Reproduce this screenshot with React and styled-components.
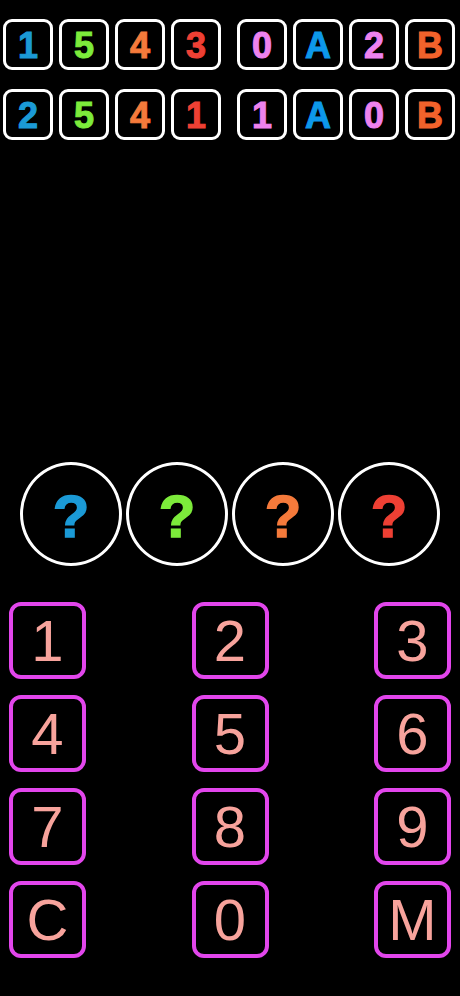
import React from 'react';
import styled, { createGlobalStyle } from 'styled-components';

const GlobalStyle = createGlobalStyle`
    html, body {
        margin: 0;
        padding: 0;
        background: #000;
    }
    body {
        font-family: "Liberation Sans", Arial, sans-serif;
    }
`;

const Screen = styled.div`
    width: 460px;
    min-height: 996px;
    background: #000;
    display: flex;
    flex-direction: column;
`;

const History = styled.div`
    display: flex;
    flex-direction: column;
    gap: 19px;
    padding: 19px 0 0 3px;
`;

const GuessRow = styled.div`
    display: flex;
    gap: 16px;
`;

const Group = styled.div`
    display: flex;
    gap: 6px;
`;

const Tile = styled.div`
    box-sizing: border-box;
    width: 50px;
    height: 51px;
    border: 3px solid #fff;
    border-radius: 9px;
    display: flex;
    align-items: center;
    justify-content: center;
    font-family: "Liberation Sans", Arial, sans-serif;
    font-weight: 700;
    font-size: 36px;
    padding-top: 3px;
    color: ${({ $color }) => $color};
    -webkit-text-stroke: 1px ${({ $color }) => $color};
`;

const Slots = styled.div`
    display: flex;
    justify-content: center;
    gap: 4px;
    margin-top: 322px;
`;

const Slot = styled.div`
    box-sizing: border-box;
    width: 102px;
    height: 104px;
    border: 3px solid #fff;
    border-radius: 50%;
    display: flex;
    align-items: center;
    justify-content: center;
    font-family: "Liberation Sans", Arial, sans-serif;
    font-weight: 700;
    font-size: 60px;
    padding-top: 4px;
    color: ${({ $color }) => $color};
    -webkit-text-stroke: 1.5px ${({ $color }) => $color};
`;

const Keypad = styled.div`
    display: grid;
    grid-template-columns: repeat(3, 77px);
    justify-content: space-between;
    row-gap: 16px;
    padding: 0 9px;
    margin-top: 36px;
`;

const Key = styled.button`
    box-sizing: border-box;
    width: 77px;
    height: 77px;
    background: transparent;
    border: 4px solid #e246ec;
    border-radius: 12px;
    display: flex;
    align-items: center;
    justify-content: center;
    padding: 0;
    font-family: "Liberation Sans", Arial, sans-serif;
    font-size: 58px;
    color: #f7a39c;
    cursor: pointer;
`;

const colors = {
    blue: '#1b9ad6',
    green: '#7deb3b',
    orange: '#f57a3b',
    red: '#ee4034',
    violet: '#ee82ee',
    sky: '#0d98ea',
    rust: '#f2622b',
};

const slotColors = [colors.blue, colors.green, colors.orange, colors.red];

const guesses = [
    { digits: ['1', '5', '4', '3'], result: ['0', 'A', '2', 'B'] },
    { digits: ['2', '5', '4', '1'], result: ['1', 'A', '0', 'B'] },
];

const resultColors = [colors.violet, colors.sky, colors.violet, colors.rust];

const keys = ['1', '2', '3', '4', '5', '6', '7', '8', '9', 'C', '0', 'M'];

const App = () => {
    return (
        <>
            <GlobalStyle />
            <Screen>
                <History>
                    {guesses.map((g, i) => (
                        <GuessRow key={i}>
                            <Group>
                                {g.digits.map((d, j) => (
                                    <Tile key={j} $color={slotColors[j]}>
                                        {d}
                                    </Tile>
                                ))}
                            </Group>
                            <Group>
                                {g.result.map((r, j) => (
                                    <Tile key={j} $color={resultColors[j]}>
                                        {r}
                                    </Tile>
                                ))}
                            </Group>
                        </GuessRow>
                    ))}
                </History>
                <Slots>
                    {slotColors.map((c, i) => (
                        <Slot key={i} $color={c}>
                            ?
                        </Slot>
                    ))}
                </Slots>
                <Keypad>
                    {keys.map((k) => (
                        <Key key={k}>{k}</Key>
                    ))}
                </Keypad>
            </Screen>
        </>
    );
};

export default App;
